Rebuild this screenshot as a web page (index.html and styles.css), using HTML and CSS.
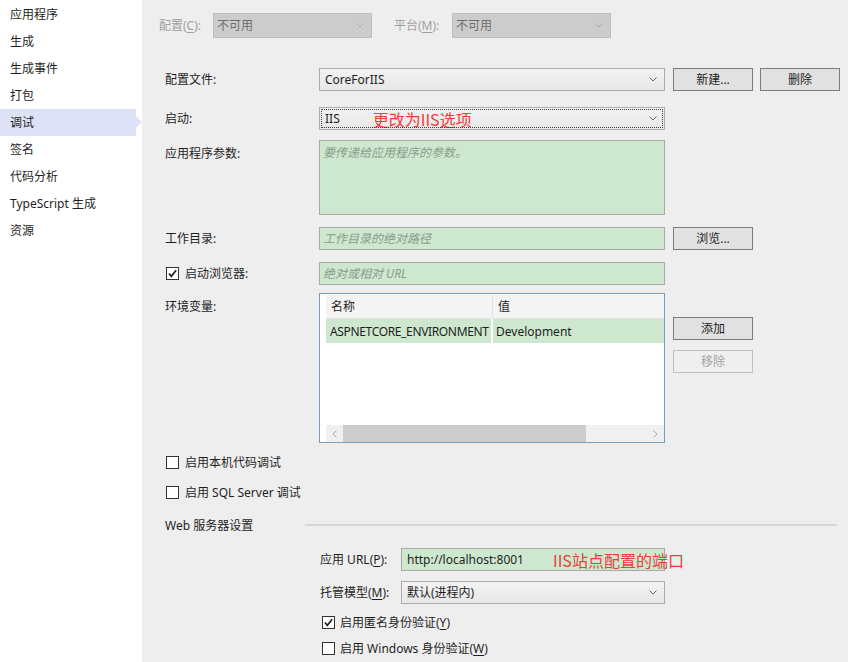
FILE: index.html
```html
<!DOCTYPE html>
<html lang="zh-CN">
<head>
<meta charset="utf-8">
<title>调试</title>
<link rel="stylesheet" href="styles.css">
</head>
<body>
<div class="app">
  <nav class="side">
    <div class="nav-item">应用程序</div>
    <div class="nav-item">生成</div>
    <div class="nav-item">生成事件</div>
    <div class="nav-item">打包</div>
    <div class="nav-item active">调试</div>
    <div class="nav-item">签名</div>
    <div class="nav-item">代码分析</div>
    <div class="nav-item">TypeScript 生成</div>
    <div class="nav-item">资源</div>
  </nav>
  <main class="content">
    <div class="topbar">
      <span class="tlabel">配置(<u>C</u>):</span>
      <div class="combo disabled"><span>不可用</span><svg class="chev" width="8" height="5" viewBox="0 0 8 5"><polyline points="0.5,0.5 4,4 7.5,0.5" fill="none" stroke="#a9a9a9" stroke-width="1"/></svg></div>
      <span class="tlabel second">平台(<u>M</u>):</span>
      <div class="combo disabled"><span>不可用</span><svg class="chev" width="8" height="5" viewBox="0 0 8 5"><polyline points="0.5,0.5 4,4 7.5,0.5" fill="none" stroke="#a9a9a9" stroke-width="1"/></svg></div>
    </div>

    <div class="form">
      <div class="row r-profile">
        <span class="lbl">配置文件:</span>
        <div class="combo field"><span>CoreForIIS</span><svg class="chev" width="8" height="5" viewBox="0 0 8 5"><polyline points="0.5,0.5 4,4 7.5,0.5" fill="none" stroke="#666" stroke-width="1"/></svg></div>
        <button class="btn first">新建...</button>
        <button class="btn second">删除</button>
      </div>

      <div class="row r-launch">
        <span class="lbl">启动:</span>
        <div class="combo field focused"><span>IIS</span><span class="note note-launch">更改为IIS选项</span><svg class="chev" width="8" height="5" viewBox="0 0 8 5"><polyline points="0.5,0.5 4,4 7.5,0.5" fill="none" stroke="#666" stroke-width="1"/></svg></div>
      </div>

      <div class="row top r-args">
        <span class="lbl lbl-top">应用程序参数:</span>
        <div class="field textarea"><span class="ph">要传递给应用程序的参数。</span></div>
      </div>

      <div class="row r-workdir">
        <span class="lbl">工作目录:</span>
        <div class="field input"><span class="ph">工作目录的绝对路径</span></div>
        <button class="btn first">浏览...</button>
      </div>

      <div class="row r-browser">
        <span class="lbl chk"><span class="box"><svg width="11" height="11" viewBox="0 0 11 11"><path d="M2 5.5 L4.3 8.3 L9.2 2.2" fill="none" stroke="#222" stroke-width="1.7"/></svg></span>启动浏览器:</span>
        <div class="field input"><span class="ph">绝对或相对 URL</span></div>
      </div>

      <div class="row top r-env">
        <span class="lbl lbl-top">环境变量:</span>
        <div class="field envgrid">
          <div class="grow ghead">
            <div class="lead"></div>
            <div class="gc c1">名称</div>
            <div class="gc c2">值</div>
          </div>
          <div class="grow gdata">
            <div class="lead"></div>
            <div class="dc c1">ASPNETCORE_ENVIRONMENT</div>
            <div class="dc c2">Development</div>
          </div>
          <div class="gfill"></div>
          <div class="gscroll">
            <div class="sbtn"><svg width="5" height="8" viewBox="0 0 5 8"><polyline points="4.5,0.5 1,4 4.5,7.5" fill="none" stroke="#a6a6a6" stroke-width="1"/></svg></div>
            <div class="thumb"></div>
            <div class="strack"></div>
            <div class="sbtn"><svg width="5" height="8" viewBox="0 0 5 8"><polyline points="0.5,0.5 4,4 0.5,7.5" fill="none" stroke="#a6a6a6" stroke-width="1"/></svg></div>
          </div>
        </div>
        <div class="envbtns">
          <button class="btn">添加</button>
          <button class="btn disabled">移除</button>
        </div>
      </div>

      <div class="row r-native">
        <span class="chk"><span class="box"></span>启用本机代码调试</span>
      </div>
      <div class="row r-sql">
        <span class="chk"><span class="box"></span>启用 SQL Server 调试</span>
      </div>

      <div class="sect">
        <span class="sect-title">Web 服务器设置</span>
        <span class="sect-line"></span>
      </div>

      <div class="iis">
        <div class="row r-url">
          <span class="ilbl">应用 URL(<u>P</u>):</span>
          <div class="ifield input"><span>http://localhost:8001</span><span class="note note-url">IIS站点配置的端口</span></div>
        </div>
        <div class="row r-host">
          <span class="ilbl">托管模型(<u>M</u>):</span>
          <div class="ifield combo"><span>默认(进程内)</span><svg class="chev" width="8" height="5" viewBox="0 0 8 5"><polyline points="0.5,0.5 4,4 7.5,0.5" fill="none" stroke="#666" stroke-width="1"/></svg></div>
        </div>
        <div class="row r-anon">
          <span class="chk ichk"><span class="box"><svg width="11" height="11" viewBox="0 0 11 11"><path d="M2 5.5 L4.3 8.3 L9.2 2.2" fill="none" stroke="#222" stroke-width="1.7"/></svg></span>启用匿名身份验证(<u>Y</u>)</span>
        </div>
        <div class="row r-win">
          <span class="chk ichk"><span class="box"></span>启用 Windows 身份验证(<u>W</u>)</span>
        </div>
      </div>
    </div>
  </main>
</div>
</body>
</html>
```
FILE: styles.css
```css
html, body {
  margin: 0;
  padding: 0;
}
body {
  font-family: "Noto Sans", "Noto Sans CJK SC", sans-serif;
  font-size: 12px;
  line-height: 17px;
  color: #1e1e1e;
  background: #eeeeee;
}
u { text-decoration: underline; text-underline-offset: 2px; }

.app {
  display: flex;
  width: 848px;
  height: 662px;
  overflow: hidden;
}

/* sidebar */
.side {
  width: 142px;
  flex: none;
  background: #ffffff;
  padding-top: 1px;
  box-sizing: border-box;
}
.nav-item {
  position: relative;
  width: 136px;
  height: 27px;
  line-height: 27px;
  padding-left: 10px;
  box-sizing: border-box;
  white-space: nowrap;
}
.nav-item.active { background: #dee2f7; }
.nav-item.active::after {
  content: "";
  position: absolute;
  left: 136px;
  top: 7px;
  border-left: 6px solid #dee2f7;
  border-top: 6.5px solid transparent;
  border-bottom: 6.5px solid transparent;
}

/* content */
.content { flex: 1; min-width: 0; }

.topbar {
  display: flex;
  align-items: center;
  padding: 13px 0 0 17px;
  height: 25px;
}
.tlabel { color: #a0a0a0; width: 54px; flex: none; white-space: nowrap; }
.tlabel.second { width: 58px; margin-left: 22px; }

.combo {
  display: flex;
  align-items: center;
  box-sizing: border-box;
  height: 23px;
  border: 1px solid #acacac;
  background: linear-gradient(#f3f3f3, #e7e7e7);
  padding: 0 7px 0 5px;
  white-space: nowrap;
}
.combo .chev { margin-left: auto; flex: none; }
.combo.disabled {
  width: 159px;
  height: 25px;
  background: #cccccc;
  border-color: #bdbdbd;
  color: #6d6d6d;
  padding-left: 3px;
}
.combo.focused { outline: 1px dotted #3a3a3a; outline-offset: -3px; }

.form { margin-left: 23px; }
.row { display: flex; align-items: center; }
.row.top { align-items: flex-start; }

.lbl { width: 154px; flex: none; white-space: nowrap; }
.lbl-top { padding-top: 5px; }
.field { width: 346px; flex: none; box-sizing: border-box; }

.input {
  display: flex;
  align-items: center;
  box-sizing: border-box;
  height: 23px;
  border: 1px solid #a9a9a9;
  background: #cde8cf;
  padding: 0 3px;
  white-space: nowrap;
}
.textarea {
  height: 75px;
  border: 1px solid #a9a9a9;
  background: #cde8cf;
  padding: 3px 3px;
}
.ph { color: #8b9b8d; font-style: italic; }

.btn {
  width: 80px;
  height: 23px;
  box-sizing: border-box;
  border: 1px solid #7c7c7c;
  background: #e1e1e1;
  font: inherit;
  color: #1e1e1e;
  padding: 0;
  flex: none;
}
.btn.first { margin-left: 8px; }
.btn.second { margin-left: 7px; }
.btn.disabled { border-color: #bfbfbf; background: #efefef; color: #a3a3a3; }

.note {
  color: #ef3b3b;
  font-family: "Noto Sans CJK SC", "Noto Sans", sans-serif;
  font-size: 16px;
  line-height: 20px;
}
.note-launch { margin-left: 33px; }
.note-url { margin-left: 29px; }

.r-profile { margin-top: 30px; }
.r-launch { margin-top: 16px; }
.r-args { margin-top: 10px; }
.r-workdir { margin-top: 12px; }
.r-browser { margin-top: 12px; }
.r-env { margin-top: 8px; }
.r-native { margin-top: 10px; height: 18px; }
.r-sql { margin-top: 12px; height: 18px; }

/* checkbox */
.chk { display: flex; align-items: center; white-space: nowrap; }
.box {
  width: 13px;
  height: 13px;
  box-sizing: border-box;
  border: 1px solid #333333;
  background: #ffffff;
  margin: 0 6px 0 1px;
  display: flex;
  align-items: center;
  justify-content: center;
  flex: none;
}
.ichk .box { margin: 0 5px 0 2px; }

/* env grid */
.envgrid {
  height: 150px;
  border: 1px solid #7f9db9;
  background: #ffffff;
  display: flex;
  flex-direction: column;
  overflow: hidden;
}
.grow { display: flex; height: 24px; flex: none; }
.ghead { margin-top: 1px; }
.lead { width: 6px; flex: none; background: #ffffff; }
.gc {
  box-sizing: border-box;
  background: #f4f4f4;
  border-bottom: 1px solid #e4e4e4;
  display: flex;
  align-items: center;
  padding-left: 5px;
}
.ghead .c1 { width: 167px; border-right: 1px solid #e2e2e2; }
.ghead .c2 { flex: 1; }
.dc {
  box-sizing: border-box;
  background: #cde8cf;
  display: flex;
  align-items: center;
  white-space: nowrap;
  overflow: hidden;
}
.gdata .c1 { width: 167px; border-right: 2px solid #ffffff; padding-left: 4px; letter-spacing: -0.35px; }
.gdata .c2 { flex: 1; padding-left: 3px; }
.gfill { flex: 1; }
.gscroll {
  height: 17px;
  flex: none;
  margin-left: 6px;
  display: flex;
  background: #f0f0f0;
}
.sbtn { width: 17px; flex: none; display: flex; align-items: center; justify-content: center; }
.thumb { width: 243px; flex: none; background: #cdcdcd; }
.strack { flex: 1; }

.envbtns {
  display: flex;
  flex-direction: column;
  gap: 10px;
  margin-top: 24px;
  margin-left: 8px;
}

/* web server section */
.sect {
  display: flex;
  align-items: center;
  height: 18px;
  margin-top: 15px;
}
.sect-title { width: 140px; flex: none; white-space: nowrap; }
.sect-line { flex: 1; height: 2px; background: #d6d6d6; margin-right: 11px; }

.iis { margin-left: 155px; }
.ilbl { width: 81px; flex: none; white-space: nowrap; }
.ifield { width: 264px; flex: none; box-sizing: border-box; }
.iis .input { padding-left: 5px; overflow: visible; }
.r-url { margin-top: 14px; }
.r-host { margin-top: 10px; }
.r-anon { margin-top: 9px; height: 18px; }
.r-win { margin-top: 8px; height: 18px; }
```
